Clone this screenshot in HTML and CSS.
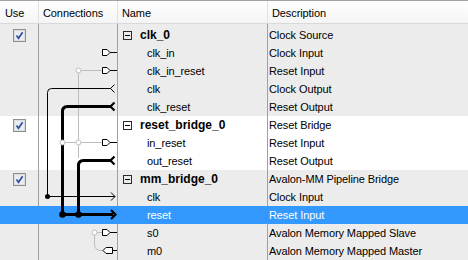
FILE: index.html
```html
<!DOCTYPE html>
<html>
<head>
<meta charset="utf-8">
<link rel="stylesheet" href="styles.css">
</head>
<body>
<div class="tree">
  <div class="head">
    <div class="hc first-col">Use</div>
    <div class="hc">Connections</div>
    <div class="hc">Name</div>
    <div class="hc last">Description</div>
  </div>
  <div class="body">
    <svg class="wires" width="78" height="236" viewBox="39 24 78 236" xmlns="http://www.w3.org/2000/svg">
      <g fill="none" stroke="#bdbdbd" stroke-width="1">
        <path d="M78.5 70.5 V158"/>
        <path d="M78.5 70.5 H102.5"/>
        <path d="M62.5 142.5 H102.5"/>
        <path d="M94.5 232.5 H102.5"/>
        <path d="M94.5 235 V244 Q94.5 250.5 101 250.5 H103"/>
      </g>
      <g fill="none" stroke="#000" stroke-width="1">
        <path d="M111 88.5 H51.5 Q47.5 88.5 47.5 92.5 V196.5 H115"/>
        <polyline points="114.5,84.5 110.5,88.5 114.5,92.5"/>
        <polyline points="111,192.5 115,196.5 111,200.5"/>
        <path d="M110 52.5 H117 M110 70.5 H117 M110 142.5 H117 M110 232.5 H117 M112.5 250.5 H117"/>
      </g>
      <circle cx="47.5" cy="196.5" r="2.5" fill="#000"/>
      <g fill="none" stroke="#000" stroke-width="3">
        <path d="M111 106.5 H67.5 Q62.5 106.5 62.5 111.5 V214.5 H113"/>
        <path d="M111 160.5 H83.5 Q78.5 160.5 78.5 165.5 V214.5"/>
      </g>
      <g fill="none" stroke="#000" stroke-width="2.2">
        <polyline points="114.5,102.5 110.5,106.5 114.5,110.5"/>
        <polyline points="114.5,156.5 110.5,160.5 114.5,164.5"/>
        <polyline points="111,210 115.5,214.5 111,219"/>
      </g>
      <circle cx="62.5" cy="214.5" r="3.3" fill="#000"/>
      <circle cx="78.5" cy="214.5" r="3.3" fill="#000"/>
      <g fill="#fff" stroke="#000" stroke-width="1">
        <polygon points="102.5,49.5 107,49.5 110,52.5 107,55.5 102.5,55.5"/>
        <polygon points="102.5,67.5 107,67.5 110,70.5 107,73.5 102.5,73.5"/>
        <polygon points="102.5,139.5 107,139.5 110,142.5 107,145.5 102.5,145.5"/>
        <polygon points="102.5,229.5 107,229.5 110,232.5 107,235.5 102.5,235.5"/>
        <polygon points="103,250.5 106,247.5 112.5,247.5 112.5,253.5 106,253.5"/>
      </g>
      <g fill="#fff" stroke="#bdbdbd" stroke-width="1">
        <circle cx="78.5" cy="70.5" r="2.5"/>
        <circle cx="78.5" cy="142.5" r="2.5"/>
        <circle cx="62.5" cy="142.5" r="2.5"/>
        <circle cx="94.5" cy="232.5" r="2.5"/>
      </g>
    </svg>

    <div class="row alt first">
      <div class="c use"><svg class="chk" width="13" height="13" viewBox="0 0 13 13"><rect x="0.5" y="0.5" width="12" height="12" fill="#f2f2f2" stroke="#8e8f8f"/><rect x="1.5" y="1.5" width="10" height="10" fill="#e9ecf2" stroke="#dcdde0"/><path d="M3.5 6.5 L5.5 9.2 L9.6 3.2" fill="none" stroke="#2d4f9e" stroke-width="1.7"/></svg></div>
      <div class="c conn"></div>
      <div class="c name grp"><span class="tog"></span><b>clk_0</b></div>
      <div class="c desc">Clock Source</div>
    </div>
    <div class="row alt">
      <div class="c use"></div><div class="c conn"></div>
      <div class="c name child">clk_in</div>
      <div class="c desc">Clock Input</div>
    </div>
    <div class="row alt">
      <div class="c use"></div><div class="c conn"></div>
      <div class="c name child">clk_in_reset</div>
      <div class="c desc">Reset Input</div>
    </div>
    <div class="row alt">
      <div class="c use"></div><div class="c conn"></div>
      <div class="c name child">clk</div>
      <div class="c desc">Clock Output</div>
    </div>
    <div class="row alt">
      <div class="c use"></div><div class="c conn"></div>
      <div class="c name child">clk_reset</div>
      <div class="c desc">Reset Output</div>
    </div>

    <div class="row">
      <div class="c use"><svg class="chk" width="13" height="13" viewBox="0 0 13 13"><rect x="0.5" y="0.5" width="12" height="12" fill="#f2f2f2" stroke="#8e8f8f"/><rect x="1.5" y="1.5" width="10" height="10" fill="#e9ecf2" stroke="#dcdde0"/><path d="M3.5 6.5 L5.5 9.2 L9.6 3.2" fill="none" stroke="#2d4f9e" stroke-width="1.7"/></svg></div>
      <div class="c conn"></div>
      <div class="c name grp"><span class="tog"></span><b>reset_bridge_0</b></div>
      <div class="c desc">Reset Bridge</div>
    </div>
    <div class="row">
      <div class="c use"></div><div class="c conn"></div>
      <div class="c name child">in_reset</div>
      <div class="c desc">Reset Input</div>
    </div>
    <div class="row">
      <div class="c use"></div><div class="c conn"></div>
      <div class="c name child">out_reset</div>
      <div class="c desc">Reset Output</div>
    </div>

    <div class="row alt">
      <div class="c use"><svg class="chk" width="13" height="13" viewBox="0 0 13 13"><rect x="0.5" y="0.5" width="12" height="12" fill="#f2f2f2" stroke="#8e8f8f"/><rect x="1.5" y="1.5" width="10" height="10" fill="#e9ecf2" stroke="#dcdde0"/><path d="M3.5 6.5 L5.5 9.2 L9.6 3.2" fill="none" stroke="#2d4f9e" stroke-width="1.7"/></svg></div>
      <div class="c conn"></div>
      <div class="c name grp"><span class="tog"></span><b>mm_bridge_0</b></div>
      <div class="c desc">Avalon-MM Pipeline Bridge</div>
    </div>
    <div class="row alt">
      <div class="c use"></div><div class="c conn"></div>
      <div class="c name child">clk</div>
      <div class="c desc">Clock Input</div>
    </div>
    <div class="row sel">
      <div class="c use"></div><div class="c conn"></div>
      <div class="c name child">reset</div>
      <div class="c desc">Reset Input</div>
    </div>
    <div class="row alt">
      <div class="c use"></div><div class="c conn"></div>
      <div class="c name child">s0</div>
      <div class="c desc">Avalon Memory Mapped Slave</div>
    </div>
    <div class="row alt">
      <div class="c use"></div><div class="c conn"></div>
      <div class="c name child">m0</div>
      <div class="c desc">Avalon Memory Mapped Master</div>
    </div>
  </div>
</div>
</body>
</html>
```

FILE: styles.css
```css
html, body {
  margin: 0;
  padding: 0;
  background: #ffffff;
}

.tree {
  width: 468px;
  height: 260px;
  overflow: hidden;
  font-family: "Liberation Sans", Arial, sans-serif;
  font-size: 11px;
  letter-spacing: -0.1px;
  color: #000;
}

.head {
  display: grid;
  grid-template-columns: 39px 79px 150px 1fr;
  height: 24px;
  box-sizing: border-box;
  border-top: 1px solid #a3a3a3;
  border-bottom: 1px solid #d9d9d9;
  background: linear-gradient(#ffffff, #f4f4f4);
}

.hc {
  display: flex;
  align-items: center;
  padding: 2px 0 0 4px;
  border-right: 1px solid #e2e2e2;
  box-sizing: border-box;
  white-space: nowrap;
}

.hc.first-col {
  padding-left: 5px;
}

.hc.last {
  border-right: none;
}

.body {
  position: relative;
}

.wires {
  position: absolute;
  left: 39px;
  top: 0;
  z-index: 2;
  overflow: visible;
}

.row {
  display: grid;
  grid-template-columns: 39px 79px 150px 1fr;
  height: 18px;
  background: #ffffff;
}

.row.first {
  height: 20px;
}

.row.first .c {
  padding-top: 2px;
}

.row.alt {
  background: #ececec;
}

.row.sel {
  background: #3399ff;
  color: #ffffff;
}

.c {
  display: flex;
  align-items: center;
  box-sizing: border-box;
  border-right: 1px solid #a0a0a0;
  white-space: nowrap;
  overflow: hidden;
}

.row.sel .c {
  border-right-color: #3399ff;
}

.c.desc {
  border-right: none;
  padding-left: 1px;
}

.c.use {
  padding-left: 13px;
}

.chk {
  display: block;
}

.c.name.grp {
  padding-left: 5px;
}

.c.name.child {
  padding-left: 29px;
}

.tog {
  width: 9px;
  height: 9px;
  box-sizing: border-box;
  border: 1px solid #2a2a2a;
  display: flex;
  align-items: center;
  justify-content: center;
  margin-right: 8px;
  flex: none;
}

.tog::before {
  content: "";
  width: 5px;
  height: 1px;
  background: #000;
}

.grp b {
  font-weight: bold;
  font-size: 12px;
  letter-spacing: 0;
}
```
